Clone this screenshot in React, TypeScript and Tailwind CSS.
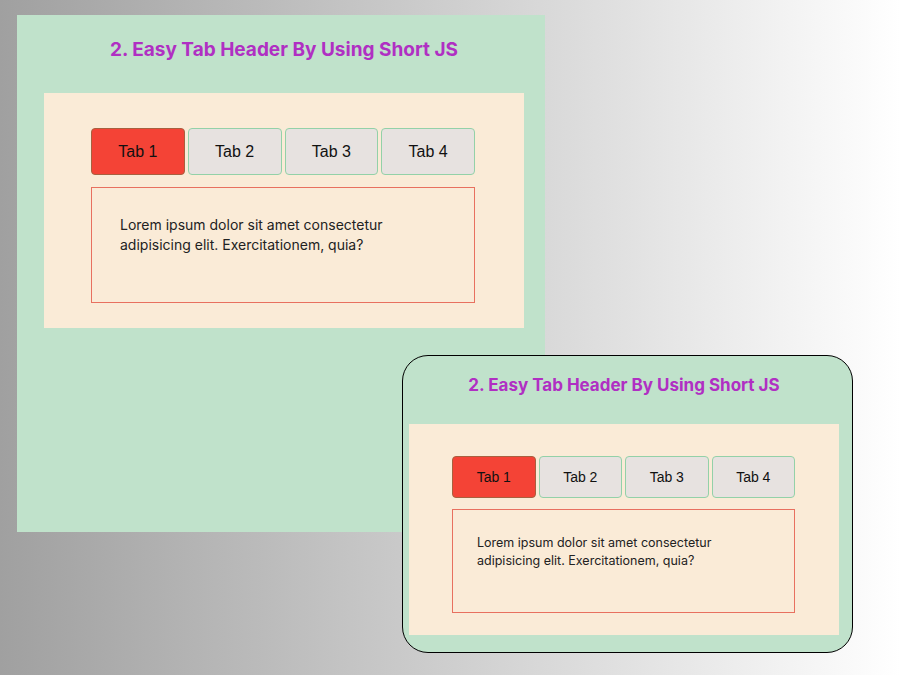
import React from "react";

const tabs = ["Tab 1", "Tab 2", "Tab 3", "Tab 4"];

function BigPanel() {
  return (
    <div className="w-[528px] h-[517px] bg-[#c0e2cb] flex flex-col">
      <div className="h-[78px] pl-[27px] pr-[21px] pb-[8px] flex items-center justify-center">
        <h2 className="font-['Inter',sans-serif] font-bold text-[19px] text-[#b02fc3]">
          2. Easy Tab Header By Using Short JS
        </h2>
      </div>
      <div className="ml-[27px] w-[480px] h-[235px] bg-[#faebd7] pl-[47px] pt-[35px]">
        <div className="w-[384px] grid grid-cols-4 gap-[3px]">
          {tabs.map((t, i) => (
            <div
              key={t}
              className={
                i === 0
                  ? "h-[47px] rounded-[4px] border border-[#a8603f] bg-[#f44336] flex items-center justify-center font-['Liberation_Sans',Arial,sans-serif] text-[16px] text-[#111]"
                  : "h-[47px] rounded-[4px] border border-[#93d1a8] bg-[#e7e2e0] flex items-center justify-center font-['Liberation_Sans',Arial,sans-serif] text-[16px] text-[#111]"
              }
            >
              {t}
            </div>
          ))}
        </div>
        <div className="mt-[12px] w-[384px] h-[116px] border border-[#e8705f] pl-[28px] pt-[27px] font-['Inter',sans-serif] text-[14px] leading-[19.5px] text-[#222]">
          Lorem ipsum dolor sit amet consectetur
          <br />
          adipisicing elit. Exercitationem, quia?
        </div>
      </div>
    </div>
  );
}

function SmallWindow() {
  return (
    <div className="w-[451px] h-[298px] bg-[#c0e2cb] border border-black rounded-[26px] overflow-hidden flex flex-col">
      <div className="h-[68px] pl-[6px] pr-[13px] pb-[8px] flex items-center justify-center">
        <h2 className="font-['Inter',sans-serif] font-bold text-[17px] text-[#b02fc3]">
          2. Easy Tab Header By Using Short JS
        </h2>
      </div>
      <div className="ml-[6px] w-[430px] h-[211px] bg-[#faebd7] pl-[43px] pt-[32px]">
        <div className="w-[343px] grid grid-cols-4 gap-[3px]">
          {tabs.map((t, i) => (
            <div
              key={t}
              className={
                i === 0
                  ? "h-[42px] rounded-[4px] border border-[#a8603f] bg-[#f44336] flex items-center justify-center font-['Liberation_Sans',Arial,sans-serif] text-[14px] text-[#111]"
                  : "h-[42px] rounded-[4px] border border-[#93d1a8] bg-[#e7e2e0] flex items-center justify-center font-['Liberation_Sans',Arial,sans-serif] text-[14px] text-[#111]"
              }
            >
              {t}
            </div>
          ))}
        </div>
        <div className="mt-[11px] w-[343px] h-[104px] border border-[#e8705f] pl-[24px] pt-[24px] font-['Inter',sans-serif] text-[12.5px] leading-[18px] text-[#222]">
          Lorem ipsum dolor sit amet consectetur
          <br />
          adipisicing elit. Exercitationem, quia?
        </div>
      </div>
    </div>
  );
}

export default function App() {
  return (
    <div className="relative w-[900px] h-[675px] overflow-hidden bg-gradient-to-r from-[#a0a0a0] to-[#ffffff] pl-[17px] pt-[15px]">
      <BigPanel />
      <div className="absolute left-[402px] top-[355px]">
        <SmallWindow />
      </div>
    </div>
  );
}
